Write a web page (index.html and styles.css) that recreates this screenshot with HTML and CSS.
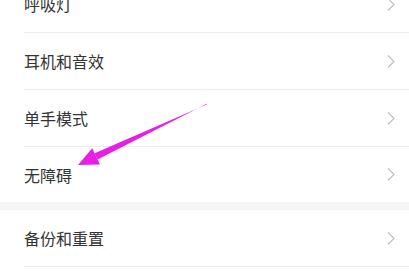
FILE: index.html
```html
<!DOCTYPE html>
<html lang="zh-CN">
<head>
    <meta charset="UTF-8">
    <meta name="viewport" content="width=device-width, initial-scale=1.0">
    <title>设置</title>
    <link rel="stylesheet" href="styles.css">
</head>
<body>
    <div class="page">
        <div class="group first">
            <div class="item">
                <span class="label">呼吸灯</span>
                <svg class="chevron" width="8" height="13" viewBox="0 0 8 13"><polyline points="1,0.5 7,6.5 1,12.5" fill="none" stroke="#bdbdbd" stroke-width="1.1"/></svg>
            </div>
            <div class="item">
                <span class="label">耳机和音效</span>
                <svg class="chevron" width="8" height="13" viewBox="0 0 8 13"><polyline points="1,0.5 7,6.5 1,12.5" fill="none" stroke="#bdbdbd" stroke-width="1.1"/></svg>
            </div>
            <div class="item">
                <span class="label">单手模式</span>
                <svg class="chevron" width="8" height="13" viewBox="0 0 8 13"><polyline points="1,0.5 7,6.5 1,12.5" fill="none" stroke="#bdbdbd" stroke-width="1.1"/></svg>
            </div>
            <div class="item last">
                <span class="label">无障碍</span>
                <svg class="chevron" width="8" height="13" viewBox="0 0 8 13"><polyline points="1,0.5 7,6.5 1,12.5" fill="none" stroke="#bdbdbd" stroke-width="1.1"/></svg>
            </div>
        </div>

        <div class="gap"></div>

        <div class="group">
            <div class="item">
                <span class="label">备份和重置</span>
                <svg class="chevron" width="8" height="13" viewBox="0 0 8 13"><polyline points="1,0.5 7,6.5 1,12.5" fill="none" stroke="#bdbdbd" stroke-width="1.1"/></svg>
            </div>
        </div>

        <!-- 标注箭头 -->
        <svg class="arrow" width="409" height="272" viewBox="0 0 409 272">
            <polygon points="207.3,103.4 206.7,104.6 94.6,153.2 97.6,159.6" fill="#e61ee6"/>
            <polygon points="78,165 92.2,148.3 100,164.5" fill="#e61ee6"/>
        </svg>
    </div>
</body>
</html>
```

FILE: styles.css
```css
body {
    margin: 0;
    background-color: #fff;
    font-family: "Noto Sans CJK SC", "Noto Sans", sans-serif;
    overflow: hidden;
}

.page {
    position: relative;
    width: 409px;
    height: 272px;
    overflow: hidden;
}

.group.first {
    margin-top: -24px;
}

.item {
    display: flex;
    align-items: center;
    justify-content: space-between;
    height: 56px;
    margin-left: 24px;
    padding-right: 14px;
    border-bottom: 1px solid #ececec;
}

.item.last {
    border-bottom: none;
    height: 55px;
}

.label {
    font-size: 16px;
    color: #333;
}

.chevron {
    display: block;
}

.gap {
    height: 8px;
    background-color: #f5f5f5;
}

.arrow {
    position: absolute;
    left: 0;
    top: 0;
}
```
